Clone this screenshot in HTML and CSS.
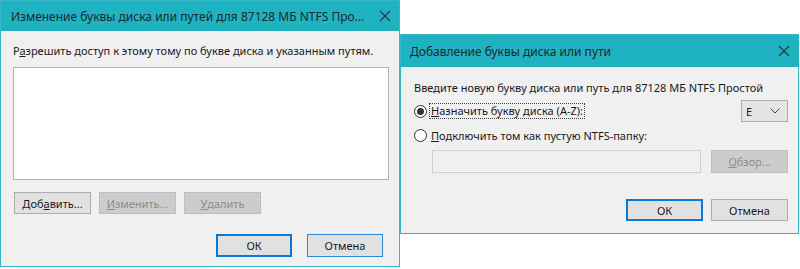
FILE: index.html
```html
<!DOCTYPE html>
<html lang="ru">
<head>
<meta charset="utf-8">
<link rel="stylesheet" href="styles.css">
</head>
<body>
<div class="desk">
  <div class="dlg dlg1">
    <div class="title">
      <span class="title-text">Изменение буквы диска или путей для 87128 МБ NTFS Про...</span>
      <svg class="close" width="12" height="12" viewBox="0 0 12 12"><path d="M1 1L11 11M11 1L1 11" stroke="#2a3a3c" stroke-width="1.2" fill="none"/></svg>
    </div>
    <div class="body1">
      <div class="label1">Р<u>а</u>зрешить доступ к этому тому по букве диска и указанным путям.</div>
      <div class="listbox"></div>
      <div class="btnrow">
        <div class="btn">Д<span>о</span>б<u>а</u>вить...</div>
        <div class="btn disabled"><u>И</u>зменить...</div>
        <div class="btn disabled"><u>У</u>далить</div>
      </div>
      <div class="footer1">
        <div class="btn def">ОК</div>
        <div class="btn def2">Отмена</div>
      </div>
    </div>
  </div>
  <div class="dlg dlg2">
    <div class="title title2">
      <span class="title-text">Добавление буквы диска или пути</span>
      <svg class="close" width="12" height="12" viewBox="0 0 12 12"><path d="M1 1L11 11M11 1L1 11" stroke="#2a3a3c" stroke-width="1.2" fill="none"/></svg>
    </div>
    <div class="body2">
      <div class="label2">Введите новую букву диска или путь для 87128 МБ NTFS Простой</div>
      <div class="row r1">
        <span class="radio checked"></span>
        <span class="focus"><u>Н</u>азначить букву диска (A-Z):</span>
        <div class="combo"><span>E</span><svg width="10" height="6" viewBox="0 0 10 6"><path d="M0.5 0.5L5 5L9.5 0.5" stroke="#444" stroke-width="1" fill="none"/></svg></div>
      </div>
      <div class="row r2">
        <span class="radio"></span>
        <span class="rlabel"><u>П</u>одключить том как пустую NTFS-папку:</span>
      </div>
      <div class="row r3">
        <div class="textbox"></div>
        <div class="btn disabled"><u>О</u>бзор...</div>
      </div>
      <div class="footer2">
        <div class="btn def">ОК</div>
        <div class="btn">Отмена</div>
      </div>
    </div>
  </div>
</div>
</body>
</html>
```
FILE: styles.css
```css
* { box-sizing: border-box; }
html, body { margin: 0; padding: 0; background: #fff; }
body {
  font-family: "Noto Sans", "Open Sans", sans-serif;
  font-size: 11px;
  color: #1a1a1a;
}
.desk { display: flex; align-items: flex-start; }
.dlg {
  border: 1px solid #35b6c2;
  background: #f0f0f0;
  display: flex;
  flex-direction: column;
}
.dlg1 { width: 400px; height: 267px; }
.dlg2 { width: 399px; height: 200px; margin-top: 34px; }
.title {
  height: 30px;
  background: #1fb2c1;
  display: flex;
  align-items: center;
  justify-content: space-between;
  padding: 0 8px 0 10px;
  font-size: 12px;
  color: #1c2a2c;
}
.title2 { height: 32px; padding-left: 9px; }
.close { display: block; }
.body1 { padding: 12px 10px 0 12px; display: flex; flex-direction: column; }
.label1 { height: 15px; line-height: 15px; }
.listbox {
  margin-top: 9px;
  width: 376px;
  height: 113px;
  background: #fff;
  border: 1px solid #b4b4b4;
}
.btnrow { display: flex; gap: 8px; margin-top: 12px; padding-left: 1px; }
.btn {
  width: 77px;
  height: 22px;
  background: #e1e1e1;
  border: 1px solid #adadad;
  display: flex;
  align-items: center;
  justify-content: center;
  color: #1a1a1a;
}
.btn.disabled { background: #cccccc; border-color: #bfbfbf; color: #8c8c8c; }
.btn.def { border: 2px solid #0a78d4; }
.btn.def2 { border: 1px solid #2b88d8; }
.footer1 { display: flex; justify-content: flex-end; gap: 15px; margin-top: 20px; padding-right: 6px; }
.footer1 .btn { width: 76px; height: 23px; }
.body2 { padding: 13px 10px 0 13px; display: flex; flex-direction: column; }
.label2 { height: 15px; line-height: 15px; }
.row { display: flex; align-items: center; }
.r1 { margin-top: 5px; height: 22px; }
.r2 { margin-top: 2px; height: 22px; }
.r3 { margin-top: 4px; padding-left: 18px; gap: 10px; }
.radio {
  width: 13px;
  height: 13px;
  border: 1px solid #333;
  border-radius: 50%;
  background: #fff;
  display: flex;
  align-items: center;
  justify-content: center;
  margin-right: 2px;
}
.radio.checked::after {
  content: "";
  width: 7px;
  height: 7px;
  border-radius: 50%;
  background: #333;
}
.focus { border: 1px dotted #444; padding: 0 1px; line-height: 14px; }
.rlabel { padding: 0 2px; }
.combo {
  margin-left: auto;
  width: 47px;
  height: 22px;
  background: #e5e5e5;
  border: 1px solid #adadad;
  display: flex;
  align-items: center;
  justify-content: space-between;
  padding: 0 7px 0 4px;
}
.combo svg { display: block; }
.textbox {
  width: 270px;
  height: 23px;
  background: #f0f0f0;
  border: 1px solid #cfcfcf;
}
.r3 .btn { width: 77px; height: 23px; }
.footer2 { display: flex; justify-content: flex-end; gap: 8px; margin-top: 26px; padding-right: 0; }
.footer2 .btn { width: 77px; height: 22px; }
```
